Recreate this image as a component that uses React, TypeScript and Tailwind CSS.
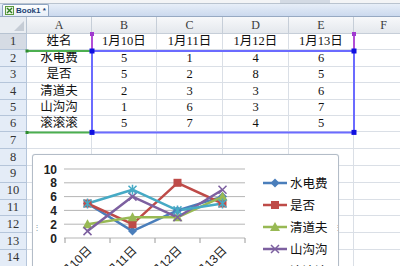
import React from "react";

const COLS = [27, 65, 65, 66, 66, 65, 60];
const LETTERS = ["A", "B", "C", "D", "E", "F"];

const DATA: string[][] = [
  ["姓名", "1月10日", "1月11日", "1月12日", "1月13日"],
  ["水电费", "5", "1", "4", "6"],
  ["是否", "5", "2", "8", "5"],
  ["清道夫", "2", "3", "3", "6"],
  ["山沟沟", "1", "6", "3", "7"],
  ["滚滚滚", "5", "7", "4", "5"],
];

const SERIES = [
  { name: "水电费", color: "#4a7ebb", marker: "diamond", values: [5, 1, 4, 6] },
  { name: "是否", color: "#be4b48", marker: "square", values: [5, 2, 8, 5] },
  { name: "清道夫", color: "#98b954", marker: "triangle", values: [2, 3, 3, 6] },
  { name: "山沟沟", color: "#7d60a0", marker: "x", values: [1, 6, 3, 7] },
  { name: "滚滚滚", color: "#46aac5", marker: "star", values: [5, 7, 4, 5] },
];

const XS = [87.5, 132.5, 177.5, 222.5];
const yOf = (v: number) => 238 - v * 6.9;

function Marker({ kind, x, y, color }: { kind: string; x: number; y: number; color: string }) {
  if (kind === "diamond")
    return <polygon points={`${x},${y - 4.5} ${x + 4.5},${y} ${x},${y + 4.5} ${x - 4.5},${y}`} fill={color} />;
  if (kind === "square") return <rect x={x - 4} y={y - 4} width={8} height={8} fill={color} />;
  if (kind === "triangle")
    return <polygon points={`${x},${y - 5} ${x + 5},${y + 4} ${x - 5},${y + 4}`} fill={color} />;
  if (kind === "x")
    return (
      <path d={`M${x - 4} ${y - 4}L${x + 4} ${y + 4}M${x + 4} ${y - 4}L${x - 4} ${y + 4}`} stroke={color} strokeWidth={1.5} />
    );
  return (
    <path
      d={`M${x - 4} ${y - 4}L${x + 4} ${y + 4}M${x + 4} ${y - 4}L${x - 4} ${y + 4}M${x} ${y - 5}L${x} ${y + 5}`}
      stroke={color}
      strokeWidth={1.5}
    />
  );
}

function Chart() {
  const labels = ["1月10日", "1月11日", "1月12日", "1月13日"];
  return (
    <div className="absolute left-[32px] top-[154px] w-[307px] h-[130px] bg-white border border-[#b3bcc7] rounded-[3px] overflow-hidden shadow-[0_0_1px_#c8d0da]">
      <svg width={307} height={130} className="block -ml-px -mt-px">
        <g transform="translate(-32,-154)" fontFamily='"Liberation Sans", "Noto Sans CJK SC", sans-serif'>
          {[0, 2, 4, 6, 8, 10].map((v) => (
            <line key={v} x1={64} x2={245} y1={yOf(v)} y2={yOf(v)} stroke="#b5b5b5" strokeWidth={1} />
          ))}
          {[0, 2, 4, 6, 8, 10].map((v) => (
            <text key={v} x={57} y={yOf(v) + 4.5} textAnchor="end" fontSize={12} fontWeight={600} fill="#222">
              {v}
            </text>
          ))}
          {[65, 110, 155, 200, 245].map((x) => (
            <line key={x} x1={x} x2={x} y1={238} y2={243} stroke="#9a9a9a" />
          ))}
          {labels.map((l, i) => (
            <text
              key={l}
              x={XS[i] + 5}
              y={251}
              textAnchor="end"
              fontSize={12}
              fill="#222"
              transform={`rotate(-45 ${XS[i] + 5} 251)`}
            >
              {l}
            </text>
          ))}
          {SERIES.map((s) => (
            <polyline
              key={s.name}
              points={s.values.map((v, i) => `${XS[i]},${yOf(v)}`).join(" ")}
              fill="none"
              stroke={s.color}
              strokeWidth={2.5}
              strokeLinejoin="round"
            />
          ))}
          {SERIES.map((s) =>
            s.values.map((v, i) => <Marker key={s.name + i} kind={s.marker} x={XS[i]} y={yOf(v)} color={s.color} />)
          )}
          {SERIES.map((s, i) => {
            const y = 183 + i * 22;
            return (
              <g key={s.name}>
                <line x1={263} x2={287} y1={y} y2={y} stroke={s.color} strokeWidth={2.5} />
                <Marker kind={s.marker} x={275} y={y} color={s.color} />
                <text x={290} y={y + 5} fontSize={12.5} fill="#111" fontFamily='"Noto Sans CJK SC", sans-serif'>
                  {s.name}
                </text>
              </g>
            );
          })}
          <text x={180} y={157} fontSize={8} fill="#8a96a6">····</text>
          <text x={33} y={230} fontSize={8} fill="#8a96a6">⋮</text>
          <text x={334} y={230} fontSize={8} fill="#8a96a6">⋮</text>
        </g>
      </svg>
    </div>
  );
}

// coloured range borders of the chart source data
function Selection() {
  const blue = "#6b6bff";
  const green = "#4caf50";
  const purple = "#b24fd6";
  return (
    <svg width={400} height={266} className="absolute inset-0 pointer-events-none">
      <path d="M92 34V51M354 34V51" stroke={purple} strokeWidth={2} />
      <path d="M27 51H92M27 132.4H92" stroke={green} strokeWidth={2} />
      <path d="M92 51H354V132.4H92Z" fill="none" stroke={blue} strokeWidth={2} />
      <rect x={90} y={32} width={4} height={4} fill="#a03ad0" />
      <rect x={352} y={32} width={4} height={4} fill="#a03ad0" />
      <rect x={25.5} y={49.5} width={3} height={3} fill="#2e8b2e" />
      <rect x={25.5} y={131} width={3} height={3} fill="#2e8b2e" />
      {[
        [92, 51],
        [354, 51],
        [354, 132.4],
        [92, 132.4],
      ].map(([x, y]) => (
        <rect key={`${x}-${y}`} x={x - 2.5} y={y - 2.5} width={5} height={5} fill="#1010e0" />
      ))}
    </svg>
  );
}

export default function App() {
  const rows = Array.from({ length: 14 }, (_, i) => i);
  return (
    <div
      className="relative w-[400px] h-[266px] overflow-hidden bg-white text-[#111]"
      style={{ fontFamily: '"Liberation Serif", "Noto Sans CJK SC", serif' }}
    >
      {/* top strip */}
      <div className="h-[4px] bg-[#f3f4f6] border-b border-[#b9c3cf] flex">
        <div className="ml-[280px] w-[50px] h-full bg-[#d3dae4]" />
      </div>
      {/* workbook tabs */}
      <div className="h-[13px] bg-gradient-to-b from-[#e7eef8] to-[#cbd9ee] border-b border-[#97a9c2] flex items-end pl-[2px]">
        <div className="h-[12px] w-[47px] flex items-center gap-[2px] pl-[2px] bg-gradient-to-b from-white to-[#e6edf7] border border-b-0 border-[#8ea4c1] rounded-t-[2px] overflow-hidden">
          <svg width="9" height="9" viewBox="0 0 9 9" className="shrink-0">
            <rect x="0.5" y="0.5" width="8" height="8" fill="#e9f3e2" stroke="#5c9a3f" />
            <path d="M2 2L7 7M7 2L2 7" stroke="#2f7d22" strokeWidth="1.4" />
          </svg>
          <span
            className="text-[8px] font-bold text-[#1c3f73] leading-none whitespace-nowrap"
            style={{ fontFamily: '"Liberation Sans", sans-serif' }}
          >
            Book1 *
          </span>
        </div>
      </div>
      {/* column headers */}
      <div className="flex h-[17px]">
        <div className="shrink-0 relative bg-[#e9edf2] border-r border-b border-[#b7c3d1]" style={{ width: COLS[0] }}>
          <div className="absolute right-[2px] bottom-[2px] w-0 h-0 border-l-[10px] border-l-transparent border-b-[10px] border-b-[#c5ccd5]" />
        </div>
        {LETTERS.map((l, i) => (
          <div
            key={l}
            className="shrink-0 flex items-center justify-center text-[12px] text-[#3a3a3a] bg-gradient-to-b from-[#f7f8fa] to-[#e4e8ed] border-r border-b border-[#c6ced8]"
            style={{ width: COLS[i + 1] }}
          >
            {l}
          </div>
        ))}
      </div>
      {/* rows */}
      {rows.map((r) => (
        <div key={r} className={`flex ${r < 6 ? "h-[16.4px]" : "h-[16.8px]"}`}>
          <div
            className={`shrink-0 flex items-center justify-center text-[12.5px] text-[#333] border-r border-b border-[#b5c5da] ${
              r === 0 ? "bg-[#d5dbe4]" : "bg-[#e4ecf7]"
            }`}
            style={{ width: COLS[0] }}
          >
            {r + 1}
          </div>
          {LETTERS.map((l, c) => (
            <div
              key={l}
              className="shrink-0 flex items-center justify-center text-[12.5px] leading-none border-r border-b border-[#dadfe6]"
              style={{ width: COLS[c + 1] }}
            >
              {DATA[r]?.[c] ?? ""}
            </div>
          ))}
        </div>
      ))}
      <Selection />
      <Chart />
    </div>
  );
}
